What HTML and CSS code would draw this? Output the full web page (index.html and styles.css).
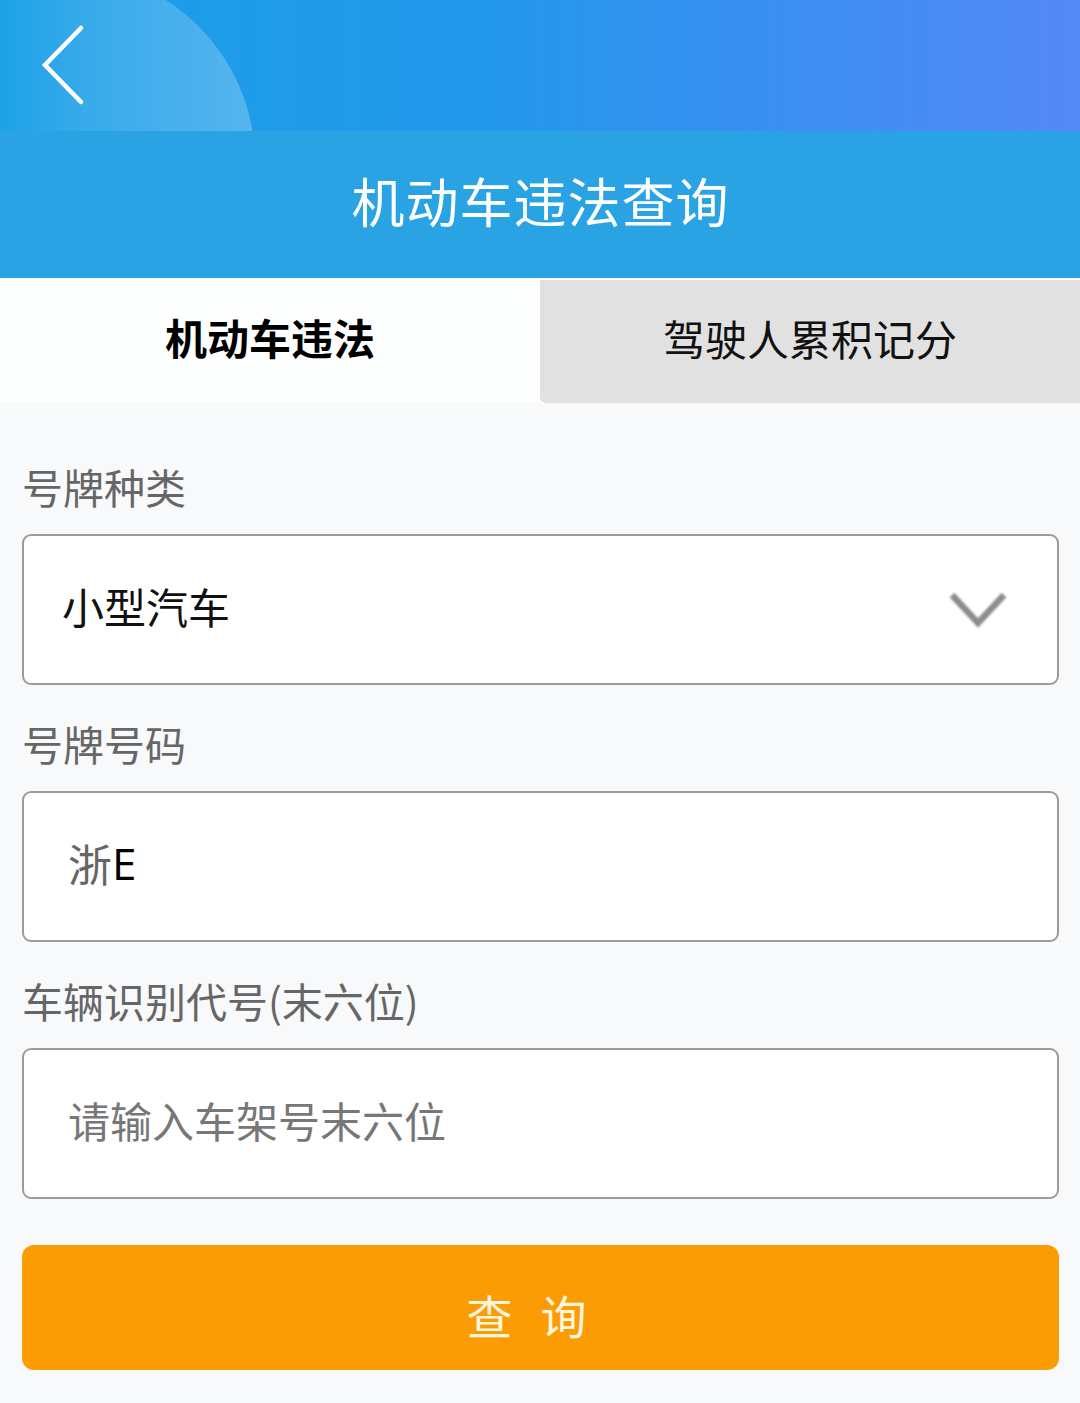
FILE: index.html
```html
<!DOCTYPE html>
<html>

<head>
    <meta charset='UTF-8'>
    <title>机动车违法查询</title>
    <link rel="stylesheet" href="styles.css">
</head>

<body>
    <!-- Status area with back arrow -->
    <div class='top-bar'>
        <a href="#" class='back-btn'>
            <svg width="48" height="84" viewBox="0 0 48 84">
                <polyline points="40,6 4,43 40,80" fill="none" stroke="#ffffff" stroke-width="4.5" stroke-linecap="round" stroke-linejoin="miter" />
            </svg>
        </a>
    </div>

    <div class='title-bar'>
        <h1 class='title'>机动车违法查询</h1>
    </div>

    <div class='tabs'>
        <div class='tab active'>机动车违法</div>
        <div class='tab'>驾驶人累积记分</div>
    </div>

    <form class='query-form'>
        <div class='field'>
            <label class='field-label'>号牌种类</label>
            <div class='field-box select-box'>
                <span class='select-value'>小型汽车</span>
                <svg class='select-arrow' width="62" height="42" viewBox="0 0 62 42">
                    <polyline points="5,6 31,34 57,6" fill="none" stroke="#8c8c8c" stroke-width="6.5" />
                </svg>
            </div>
        </div>

        <div class='field'>
            <label class='field-label'>号牌号码</label>
            <div class='field-box input-box'>
                <span class='plate-prefix'>浙</span><span class='plate-value'>E</span>
            </div>
        </div>

        <div class='field'>
            <label class='field-label'>车辆识别代号(末六位)</label>
            <div class='field-box input-box'>
                <input type='text' class='text-input' placeholder='请输入车架号末六位'>
            </div>
        </div>

        <button type='button' class='submit-btn'>查询</button>
    </form>
</body>

</html>
```

FILE: styles.css
```css
:root {
    --blue-bar: #29a3e3;
    --border-color: #9b9b9b;
    --label-color: #666666;
    --page-bg: #f8f9fa;
}

body {
    margin: 0;
    background-color: var(--page-bg);
    font-family: "Noto Sans CJK SC", "Noto Sans", sans-serif;
    width: 1080px;
}

.top-bar {
    position: relative;
    height: 131px;
    overflow: hidden;
    background: linear-gradient(90deg, #19a0e7 0%, #2398eb 45%, #3d8ef3 75%, #5488f6 100%);
}

/* light half-circle decoration behind the back arrow */
.top-bar::before {
    content: '';
    position: absolute;
    left: -130px;
    top: -30px;
    width: 385px;
    height: 385px;
    border-radius: 50%;
    background: linear-gradient(90deg, rgba(255, 255, 255, 0) 30%, rgba(255, 255, 255, 0.12) 55%, rgba(255, 255, 255, 0.25) 100%);
}

.back-btn {
    position: relative;
    display: inline-block;
    margin: 22px 0 0 41px;
}

.title-bar {
    box-sizing: border-box;
    height: 147px;
    padding-bottom: 10px;
    background-color: var(--blue-bar);
    display: flex;
    align-items: center;
    justify-content: center;
}

.title {
    margin: 0;
    color: #ffffff;
    font-size: 53px;
    font-weight: 400;
    letter-spacing: 1px;
    padding-left: 1px;
}

.tabs {
    display: grid;
    grid-template-columns: 540px 540px;
    height: 125px;
    background: #fdfefe;
}

.tab {
    display: flex;
    align-items: center;
    justify-content: center;
    padding-bottom: 8px;
    font-size: 42px;
    color: #111111;
    background: #e1e1e1;
    margin-top: 2px;
    border-bottom-left-radius: 6px;
}

.tab.active {
    background: #fdfefe;
    font-weight: 700;
    color: #000000;
    margin-top: 0;
}

.query-form {
    padding: 55px 21px 0 22px;
}

.field {
    display: flex;
    flex-direction: column;
    margin-bottom: 30px;
}

.field-label {
    font-size: 41px;
    line-height: 56px;
    color: var(--label-color);
    margin: 0 0 20px 0;
}

.field-box {
    box-sizing: border-box;
    height: 151px;
    background: #ffffff;
    border: 2px solid var(--border-color);
    border-radius: 9px;
    display: flex;
    align-items: center;
}

.select-box {
    justify-content: space-between;
    padding: 0 48px 0 38px;
}

.select-value {
    font-size: 42px;
    color: #111111;
    padding-bottom: 8px;
}

.select-arrow {
    filter: blur(0.9px);
}

.input-box {
    padding: 0 0 8px 44px;
    font-size: 44px;
}

.plate-prefix {
    color: #666666;
}

.plate-value {
    color: #000000;
    font-family: "Open Sans", "Noto Sans", sans-serif;
}

.text-input {
    border: none;
    outline: none;
    background: transparent;
    width: 100%;
    padding: 0;
    font-family: inherit;
    font-size: 42px;
    color: #111111;
}

.text-input::placeholder {
    color: #777777;
}

.submit-btn {
    display: block;
    width: 100%;
    height: 125px;
    margin-top: 46px;
    padding: 12px 0 0 0;
    border: none;
    border-radius: 12px;
    background-color: #fc9c05;
    color: #fff6dc;
    font-family: inherit;
    font-size: 46px;
    letter-spacing: 28px;
    cursor: pointer;
}
```
